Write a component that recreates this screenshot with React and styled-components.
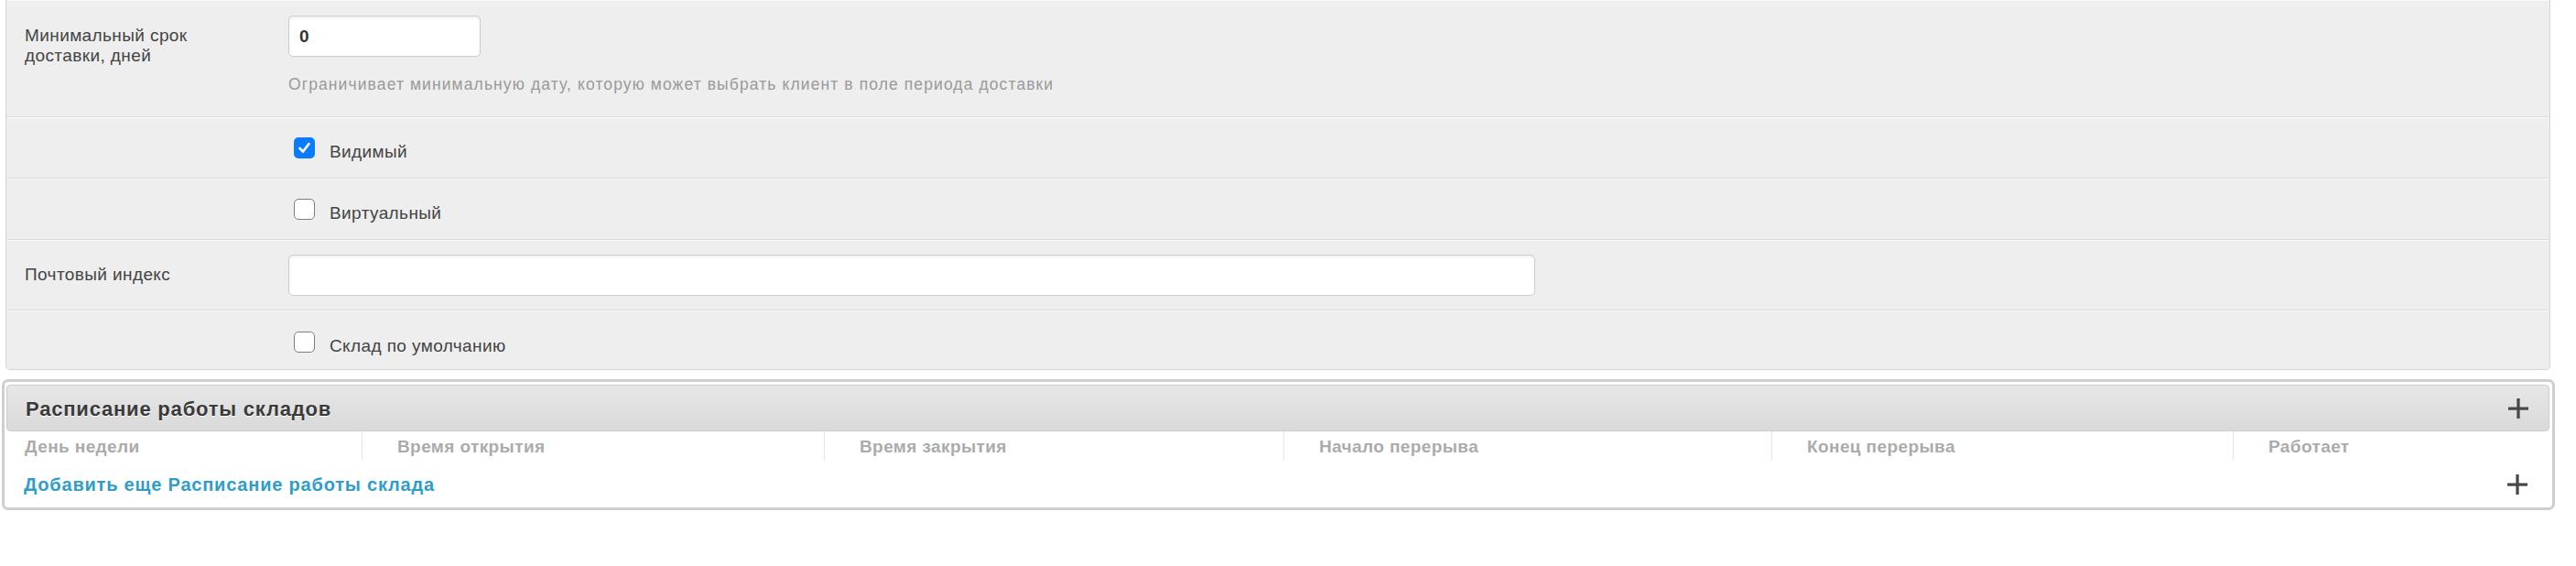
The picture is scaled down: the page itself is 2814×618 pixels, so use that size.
import styled, { createGlobalStyle } from "styled-components";

const GlobalStyle = createGlobalStyle`
  body {
    margin: 0;
    background: #fff;
    font-family: "Liberation Sans", Arial, sans-serif;
    color: #444;
  }
`;

const Page = styled.div`
  padding: 0 23px 40px 2px;
`;

const Panel = styled.div`
  margin: 0 5px 0 4px;
  background: #eeeeee;
  border: 1px solid #d4d4d4;
  border-top: none;
  border-radius: 0 0 5px 5px;
`;

const Row = styled.div`
  display: grid;
  grid-template-columns: 288px 1fr;
  padding: ${(p) => p.$pad || "15px 20px"};
  border-top: 1px solid #fafafa;
  border-bottom: 1px solid #dcdcdc;

  &:last-child {
    border-bottom: none;
  }
`;

const Label = styled.div`
  font-size: 19px;
  letter-spacing: 0.4px;
  line-height: 22px;
  color: #444;
  padding-top: ${(p) => p.$top || "11px"};
`;

const Control = styled.div`
  display: flex;
  flex-direction: column;
  align-items: flex-start;
`;

const Input = styled.div`
  box-sizing: border-box;
  width: ${(p) => p.$width};
  height: 45px;
  padding: 0 11px;
  display: flex;
  align-items: center;
  background: #fff;
  border: 1px solid #cccccc;
  border-radius: 5px;
  box-shadow: inset 0 2px 3px rgba(0, 0, 0, 0.06);
  font-size: 19px;
  font-weight: bold;
  color: #333;
`;

const Help = styled.div`
  margin-top: 19px;
  font-size: 17.5px;
  letter-spacing: 1.1px;
  line-height: 22px;
  color: #9a9a9a;
`;

const CheckLine = styled.div`
  display: flex;
  align-items: flex-start;
  gap: 16px;
  margin-left: 6px;
  font-size: 19px;
  letter-spacing: 0.4px;
  line-height: 22px;
  color: #444;

  span {
    padding-top: 5px;
  }
`;

const Box = styled.div`
  box-sizing: border-box;
  width: 23px;
  height: 23px;
  border-radius: 5px;
  display: flex;
  align-items: center;
  justify-content: center;
  background: ${(p) => (p.$checked ? "#0b7bff" : "#fff")};
  border: ${(p) => (p.$checked ? "none" : "1.5px solid #7d7d7d")};
`;

const Schedule = styled.div`
  margin-top: 10px;
  border: 3px solid #cfcfcf;
  border-radius: 7px;
  background: #fff;
  padding: 3px 3px 0 2px;
`;

const Bar = styled.div`
  display: flex;
  justify-content: space-between;
  align-items: center;
  height: 49px;
  padding: 0 22px 0 20px;
  border: 1px solid #cccccc;
  border-radius: 4px;
  background: linear-gradient(#e7e7e7, #d9d9d9);
`;

const Title = styled.div`
  font-size: 22px;
  letter-spacing: 0.8px;
  font-weight: bold;
  color: #3a3a3a;
  text-shadow: 0 1px 0 #fff;
  margin-top: 3px;
`;

const Columns = styled.div`
  display: grid;
  grid-template-columns: 388px 505px 502px 533px 504px 1fr;
`;

const Col = styled.div`
  height: 32px;
  box-sizing: border-box;
  padding: 6px 0 0 ${(p) => (p.$first ? "20px" : "38px")};
  border-left: ${(p) => (p.$first ? "none" : "1px solid #e6e6e6")};
  font-size: 19px;
  letter-spacing: 0.4px;
  line-height: 22px;
  font-weight: bold;
  color: #ababab;
`;

const AddRow = styled.div`
  display: flex;
  justify-content: space-between;
  align-items: center;
  padding: 15px 24px 14px 19px;
`;

const AddLink = styled.a`
  font-size: 20px;
  letter-spacing: 0.8px;
  line-height: 22px;
  font-weight: bold;
  color: #2f9dca;
  text-decoration: none;
`;

function Plus() {
  return (
    <svg width="22" height="22" viewBox="0 0 22 22">
      <rect x="0" y="9.5" width="22" height="3.2" fill="#474747" />
      <rect x="9.4" y="0" width="3.2" height="22" fill="#474747" />
    </svg>
  );
}

function Check({ checked, children }) {
  return (
    <CheckLine>
      <Box $checked={checked}>
        {checked && (
          <svg width="15" height="15" viewBox="0 0 15 15">
            <path
              d="M2.5 8 L6 11.5 L12.5 3"
              fill="none"
              stroke="#fff"
              strokeWidth="2.6"
              strokeLinecap="round"
              strokeLinejoin="round"
            />
          </svg>
        )}
      </Box>
      <span>{children}</span>
    </CheckLine>
  );
}

const columns = [
  "День недели",
  "Время открытия",
  "Время закрытия",
  "Начало перерыва",
  "Конец перерыва",
  "Работает",
];

export default function App() {
  return (
    <Page>
      <GlobalStyle />
      <Panel>
        <Row $pad="16px 20px 24px">
          <Label>
            Минимальный срок
            <br />
            доставки, дней
          </Label>
          <Control>
            <Input $width="210px">0</Input>
            <Help>
              Ограничивает минимальную дату, которую может выбрать клиент в поле
              периода доставки
            </Help>
          </Control>
        </Row>
        <Row $pad="21px 20px 17px">
          <div />
          <Check checked>Видимый</Check>
        </Row>
        <Row $pad="21px 20px 17px">
          <div />
          <Check>Виртуальный</Check>
        </Row>
        <Row $pad="15px 20px">
          <Label>Почтовый индекс</Label>
          <Control>
            <Input $width="1362px" />
          </Control>
        </Row>
        <Row $pad="22px 20px 14px">
          <div />
          <Check>Склад по умолчанию</Check>
        </Row>
      </Panel>

      <Schedule>
        <Bar>
          <Title>Расписание работы складов</Title>
          <Plus />
        </Bar>
        <Columns>
          {columns.map((c, i) => (
            <Col key={c} $first={i === 0}>
              {c}
            </Col>
          ))}
        </Columns>
        <AddRow>
          <AddLink href="#">Добавить еще Расписание работы склада</AddLink>
          <Plus />
        </AddRow>
      </Schedule>
    </Page>
  );
}
